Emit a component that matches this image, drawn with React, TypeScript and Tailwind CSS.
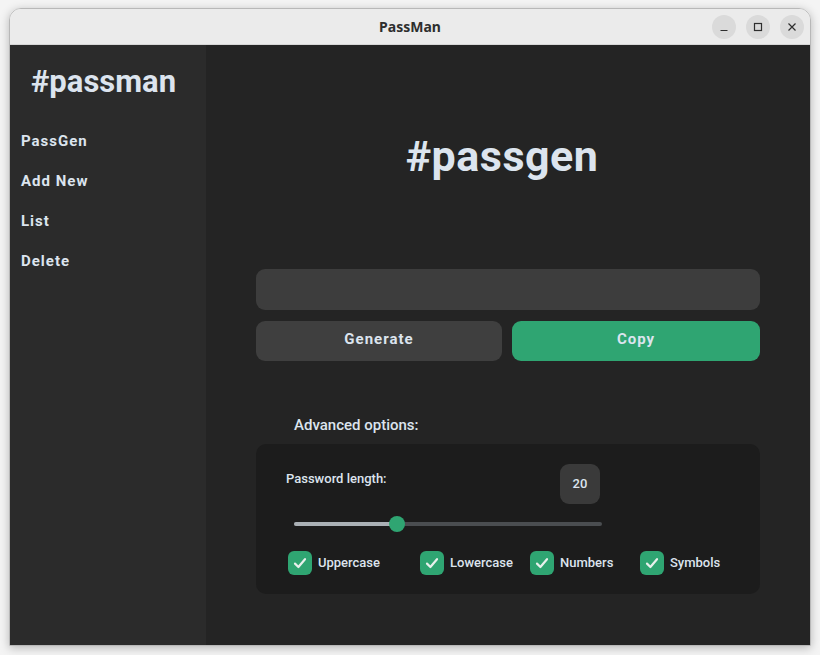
import React, { useState } from 'react';

const TEXT = 'text-[#dce4ee]';

const Check: React.FC<{ label: string; className?: string }> = ({ label, className }) => {
  const [on, setOn] = useState(true);
  return (
    <label className={`flex items-center gap-[6px] cursor-pointer ${className ?? ''}`} onClick={() => setOn(v => !v)}>
      <span className={`w-[24px] h-[24px] rounded-[6px] flex items-center justify-center ${on ? 'bg-[#2fa572]' : 'border-2 border-[#565b5e]'}`}>
        {on && (
          <svg width="16" height="16" viewBox="0 0 16 16" fill="none">
            <path d="M3 8.6 L6.4 12 L13 4.2" stroke="#e8f0ec" strokeWidth="2.2" strokeLinecap="round" strokeLinejoin="round" />
          </svg>
        )}
      </span>
      <span className={`text-[13px] font-medium ${TEXT}`}>{label}</span>
    </label>
  );
};

const App: React.FC = () => {
  const [length, setLength] = useState(20);
  const pct = ((length - 8) / (44 - 8)) * 100;

  return (
    <div className="w-[820px] h-[655px] bg-[#f4f4f4] pt-[8px] pl-[9px]" style={{ fontFamily: 'Roboto, "Noto Sans", sans-serif' }}>
      <div className="w-[802px] h-[638px] rounded-t-[12px] border border-[#b8b8b8] shadow-[0_2px_10px_rgba(0,0,0,0.25)] flex flex-col overflow-hidden">
        {/* Title bar */}
        <div className="h-[36px] bg-[#ebebeb] border-b border-[#d6d6d6] flex items-center relative">
          <div className="flex-1 text-center text-[14px] font-bold text-[#2e2e2e]" style={{ fontFamily: '"Noto Sans", "DejaVu Sans", sans-serif' }}>
            PassMan
          </div>
          <div className="absolute right-[6px] top-[6px] flex gap-[10px]">
            <div className="w-[24px] h-[24px] rounded-full bg-[#dadada] flex items-center justify-center">
              <svg width="10" height="10" viewBox="0 0 10 10"><path d="M1.5 8.5 H8.5" stroke="#2e2e2e" strokeWidth="1.2" /></svg>
            </div>
            <div className="w-[24px] h-[24px] rounded-full bg-[#dadada] flex items-center justify-center">
              <svg width="10" height="10" viewBox="0 0 10 10"><rect x="1.5" y="1.5" width="7" height="7" fill="none" stroke="#2e2e2e" strokeWidth="1.2" /></svg>
            </div>
            <div className="w-[24px] h-[24px] rounded-full bg-[#dadada] flex items-center justify-center">
              <svg width="10" height="10" viewBox="0 0 10 10"><path d="M1.5 1.5 L8.5 8.5 M8.5 1.5 L1.5 8.5" stroke="#2e2e2e" strokeWidth="1.2" /></svg>
            </div>
          </div>
        </div>

        <div className="flex-1 flex">
          {/* Sidebar */}
          <aside className="w-[196px] bg-[#2b2b2b] flex flex-col">
            <h1 className={`mt-[17px] pl-[21px] text-[31px] font-bold leading-[40px] ${TEXT}`}>#passman</h1>
            <nav className="mt-[19px] pl-[11px] flex flex-col">
              {['PassGen', 'Add New', 'List', 'Delete'].map(item => (
                <div key={item} className={`h-[40px] flex items-center text-[15px] font-bold tracking-[1px] ${TEXT}`}>
                  {item}
                </div>
              ))}
            </nav>
          </aside>

          {/* Main */}
          <main className="flex-1 bg-[#242424] flex flex-col items-center">
            <h2 className={`mt-[86px] mr-[12px] text-[43px] font-bold leading-[50px] tracking-[0.5px] ${TEXT}`}>#passgen</h2>

            <div className="mt-[88px] w-[504px] flex flex-col">
              <input
                className={`h-[41px] rounded-[9px] bg-[#3d3d3d] px-3 text-[14px] outline-none ${TEXT}`}
                readOnly
              />
              <div className="mt-[11px] flex gap-[10px]">
                <button className={`w-[246px] h-[40px] pb-[3px] rounded-[9px] bg-[#3f3f3f] text-[15px] font-bold tracking-[1px] ${TEXT}`}>
                  Generate
                </button>
                <button className={`flex-1 h-[40px] pb-[3px] rounded-[9px] bg-[#2fa572] text-[15px] font-bold tracking-[1px] ${TEXT}`}>
                  Copy
                </button>
              </div>

              <div className={`mt-[54px] pl-[38px] text-[15px] font-medium leading-[20px] ${TEXT}`}>Advanced options:</div>

              <div className="mt-[9px] h-[150px] rounded-[10px] bg-[#1c1c1c] flex flex-col pl-[30px]">
                <div className="mt-[20px] flex">
                  <div className={`mt-[8px] w-[274px] text-[13px] font-medium leading-[14px] ${TEXT}`}>Password length:</div>
                  <div className={`w-[40px] h-[40px] rounded-[9px] bg-[#3a3a3a] flex items-center justify-center text-[13px] font-medium ${TEXT}`}>
                    {length}
                  </div>
                </div>

                <div className="mt-[12px] ml-[8px] w-[308px] h-[16px] relative flex items-center">
                  <div className="w-full h-[4px] rounded-full bg-[#4a4d50]">
                    <div className="h-full rounded-full bg-[#aab0b5]" style={{ width: `${pct}%` }} />
                  </div>
                  <div
                    className="absolute top-0 w-[16px] h-[16px] rounded-full bg-[#2fa572]"
                    style={{ left: `calc(${pct}% - 8px)` }}
                  />
                  <input
                    type="range"
                    min={8}
                    max={44}
                    value={length}
                    onChange={e => setLength(Number(e.target.value))}
                    className="absolute inset-0 opacity-0 cursor-pointer"
                  />
                </div>

                <div className="mt-[19px] ml-[2px] flex">
                  <Check label="Uppercase" className="w-[132px]" />
                  <Check label="Lowercase" className="w-[110px]" />
                  <Check label="Numbers" className="w-[110px]" />
                  <Check label="Symbols" />
                </div>
              </div>
            </div>
          </main>
        </div>
      </div>
    </div>
  );
};

export default App;
